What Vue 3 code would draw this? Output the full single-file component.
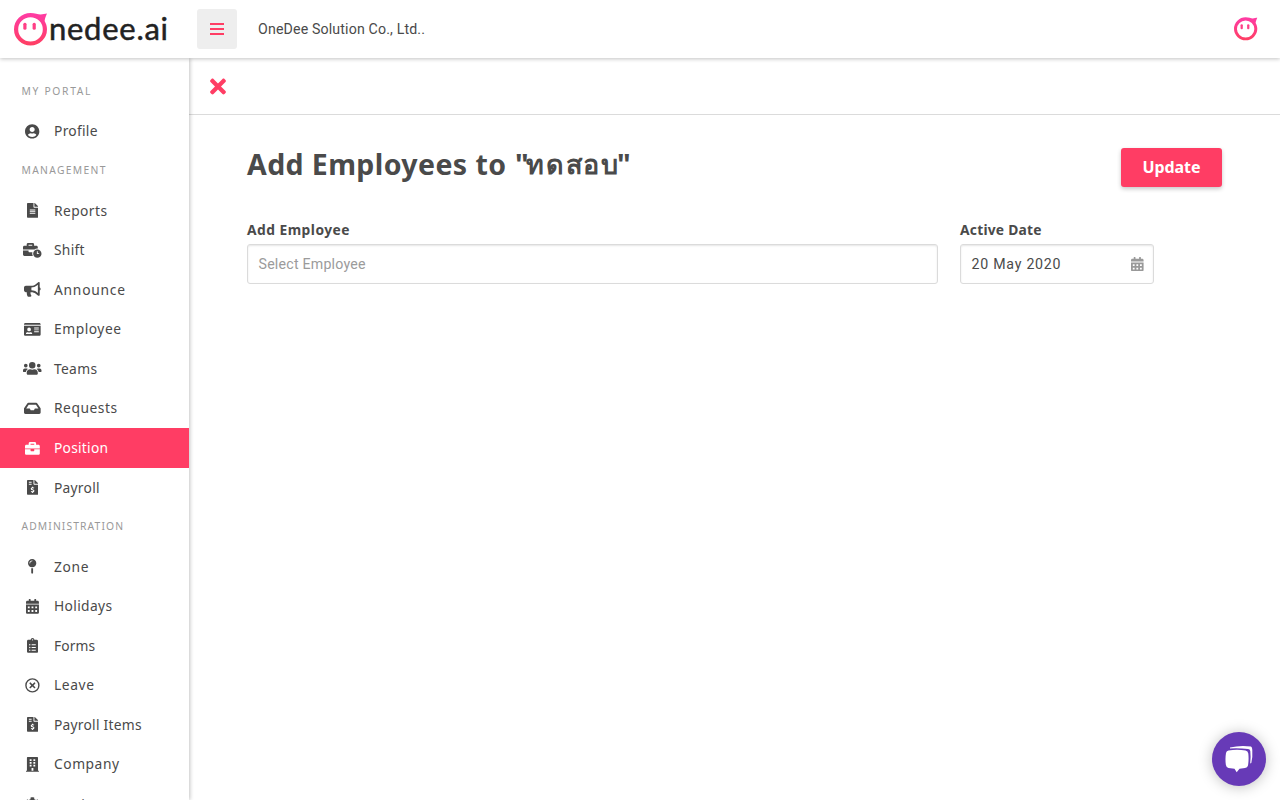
<script setup>
const circle = (x, y, r) => `M${x - r} ${y}a${r} ${r} 0 1 0 ${2 * r} 0a${r} ${r} 0 1 0 ${-2 * r} 0z`
const rect = (x, y, w, h) => `M${x} ${y}h${w}v${h}h${-w}z`

const dollarFile = {
  w: 384,
  d: 'M224 136V0H24C10.700 0 0 10.700 0 24v464c0 13.300 10.700 24 24 24h336c13.300 0 24-10.700 24-24V160H248c-13.200 0-24-10.800-24-24zM384 121.900v6.100H256V0h6.100c6.400 0 12.500 2.500 17 7l97.900 98c4.500 4.500 7 10.600 7 16.900z' + rect(64, 64, 96, 32) + rect(64, 128, 96, 32),
  cut: 'M240 284c-14-16-32-18-48-18-28 0-45 14-45 34 0 46 92 28 92 76 0 22-20 36-47 36-18 0-36-5-50-19M192 232v34M192 412v34'
}
const calendar = {
  w: 448,
  d: 'M0 464c0 26.500 21.500 48 48 48h352c26.500 0 48-21.500 48-48V192H0zM400 64h-48V16c0-8.800-7.200-16-16-16h-32c-8.800 0-16 7.200-16 16v48H160V16c0-8.800-7.200-16-16-16h-32c-8.800 0-16 7.200-16 16v48H48C21.500 64 0 85.500 0 112v48h448v-48c0-26.500-21.500-48-48-48z' +
    [64, 192, 320].map(x => rect(x, 256, 64, 64) + rect(x, 384, 64, 64)).join('')
}
const icons = {
  user: { w: 496, d: 'M248 8C111 8 0 119 0 256s111 248 248 248 248-111 248-248S385 8 248 8zm0 96c48.600 0 88 39.400 88 88s-39.400 88-88 88-88-39.400-88-88 39.400-88 88-88zm0 344c-58.700 0-111.300-26.600-146.500-68.200 18.800-35.400 55.600-59.800 98.500-59.800 2.400 0 4.800.4 7.100 1.100 13 4.200 26.600 6.900 40.900 6.900s28-2.700 40.900-6.900c2.300-.7 4.700-1.100 7.100-1.100 42.900 0 79.700 24.400 98.500 59.800C359.300 421.400 306.700 448 248 448z' },
  file: { w: 384, d: 'M224 136V0H24C10.700 0 0 10.700 0 24v464c0 13.300 10.700 24 24 24h336c13.300 0 24-10.700 24-24V160H248c-13.200 0-24-10.800-24-24zM384 121.900v6.100H256V0h6.100c6.400 0 12.500 2.500 17 7l97.900 98c4.500 4.500 7 10.600 7 16.900z' + rect(96, 224, 192, 32) + rect(96, 288, 192, 32) + rect(96, 352, 192, 32) },
  shift: { w: 640, d: 'M496 224c-79.590 0-144 64.410-144 144s64.410 144 144 144 144-64.410 144-144-64.410-144-144-144zm64 150.290c0 5.340-4.370 9.710-9.710 9.710h-60.570c-5.340 0-9.710-4.370-9.710-9.710v-76.570c0-5.340 4.370-9.710 9.710-9.710h12.570c5.340 0 9.710 4.370 9.710 9.710V352h38.290c5.340 0 9.710 4.370 9.710 9.710zM496 192c5.400 0 10.720.33 16 .81V144c0-25.600-22.400-48-48-48h-80V48c0-25.600-22.400-48-48-48H176c-25.600 0-48 22.400-48 48v48H48c-25.600 0-48 22.400-48 48v80h395.120c28.600-20.090 63.350-32 100.880-32zM320 96H192V64h128zm6.820 224H208c-8.840 0-16-7.160-16-16v-48H0v144c0 25.600 22.400 48 48 48h291.430C327.100 423.960 320 396.820 320 368c0-16.660 2.480-32.720 6.820-48z' },
  horn: { w: 576, d: 'M576 240c0-23.630-12.950-44.040-32-55.120V32.010C544 23.260 537.020 0 512 0c-7.120 0-14.190 2.380-19.980 7.020l-85.030 68.030C364.280 109.190 310.660 128 256 128H64c-35.350 0-64 28.650-64 64v96c0 35.350 28.650 64 64 64h33.700c-1.390 10.480-2.180 21.140-2.180 32 0 39.770 9.260 77.350 25.560 110.940 5.190 10.690 16.520 17.060 28.400 17.060h74.280c26.050 0 41.690-29.840 25.900-50.560-16.400-21.520-26.150-48.360-26.150-77.440 0-11.110 1.620-21.790 4.410-32H256c54.660 0 108.280 18.810 150.980 52.950l85.030 68.030a32 32 0 0 0 19.980 7.020c24.920 0 32-22.780 32-32V295.130C563.050 284.040 576 263.630 576 240zm-96 141.420l-33.050-26.440C392.950 311.780 325.120 288 256 288v-96c69.120 0 136.950-23.780 190.950-66.980L480 98.580z' },
  card: { w: 576, d: 'M528 32H48C21.500 32 0 53.500 0 80v16h576V80c0-26.500-21.500-48-48-48zM0 432c0 26.500 21.500 48 48 48h480c26.500 0 48-21.500 48-48V128H0zM67.100 396.200C75.500 370.500 99.600 352 128 352h8.200c12.300 5.100 25.700 8 39.800 8s27.600-2.900 39.800-8h8.200c28.400 0 52.500 18.500 60.900 44.200 3.200 9.900-5.200 19.800-15.600 19.800H82.700c-10.400 0-18.800-10-15.600-19.800z' + circle(176, 256, 64) + rect(352, 192, 160, 32) + rect(352, 256, 160, 32) + rect(352, 320, 160, 32) },
  users: { w: 640, d: circle(96, 160, 64) + circle(544, 160, 64) + circle(320, 144, 112) + 'M576 256h-64c-17.600 0-33.500 7.100-45.100 18.600 40.300 22.100 68.900 62 75.100 109.400h66c17.700 0 32-14.300 32-32v-32c0-35.300-28.700-64-64-64zM396.800 288h-8.300c-20.800 10-43.900 16-68.500 16s-47.600-6-68.500-16h-8.300C179.600 288 128 339.600 128 403.200V432c0 26.500 21.500 48 48 48h288c26.500 0 48-21.500 48-48v-28.800c0-63.600-51.600-115.200-115.200-115.200zm-223.700-13.400C161.500 263.100 145.600 256 128 256H64c-35.300 0-64 28.700-64 64v32c0 17.700 14.300 32 32 32h65.900c6.300-47.400 34.900-87.300 75.200-109.400z' },
  inbox: { w: 576, d: 'M567.938 243.908L462.250 85.374A48 48 0 0 0 422.311 64H153.689a48 48 0 0 0-39.938 21.374L8.062 243.908A48 48 0 0 0 0 270.533V400c0 26.510 21.490 48 48 48h480c26.510 0 48-21.490 48-48V270.533a48 48 0 0 0-8.062-26.625zM162.252 128h251.497l85.333 128H376l-32 64H232l-32-64H76.918z' },
  briefcase: { w: 512, d: 'M320 336c0 8.840-7.160 16-16 16h-96c-8.840 0-16-7.160-16-16v-48H0v144c0 25.600 22.400 48 48 48h416c25.600 0 48-22.400 48-48V288H320zm144-208h-80V80c0-25.600-22.400-48-48-48H176c-25.600 0-48 22.400-48 48v48H48c-25.600 0-48 22.400-48 48v80h512v-80c0-25.600-22.400-48-48-48zm-144 0H192V96h128z' },
  dollarFile,
  pin: { w: 288, d: 'M112 316.940v156.690l22.020 33.020c4.750 7.120 15.220 7.120 19.970 0L176 473.630V316.940c-10.390 1.920-21.060 3.060-32 3.060s-21.610-1.140-32-3.060zM144 0C64.470 0 0 64.470 0 144s64.470 144 144 144 144-64.470 144-144S223.530 0 144 0zm0 76c-37.500 0-68 30.500-68 68 0 6.620-5.380 12-12 12s-12-5.380-12-12c0-50.730 41.280-92 92-92 6.620 0 12 5.380 12 12s-5.380 12-12 12z' },
  calendar,
  clipboard: { w: 384, d: 'M336 64h-80c0-35.300-28.700-64-64-64s-64 28.700-64 64H48C21.500 64 0 85.500 0 112v352c0 26.500 21.500 48 48 48h288c26.500 0 48-21.500 48-48V112c0-26.500-21.500-48-48-48z' + circle(192, 64, 24) + circle(96, 232, 24) + circle(96, 328, 24) + circle(96, 424, 24) + rect(160, 216, 144, 32) + rect(160, 312, 144, 32) + rect(160, 408, 144, 32) },
  leave: { w: 512, d: circle(256, 256, 248) + circle(256, 256, 200) + 'M357.800 193.800L295.600 256l62.200 62.200c4.700 4.700 4.700 12.300 0 17l-22.600 22.600c-4.700 4.700-12.300 4.700-17 0L256 295.600l-62.200 62.200c-4.700 4.700-12.300 4.700-17 0l-22.600-22.600c-4.700-4.700-4.700-12.300 0-17l62.200-62.200-62.200-62.200c-4.700-4.700-4.700-12.300 0-17l22.600-22.600c4.700-4.700 12.300-4.700 17 0l62.200 62.200 62.200-62.200c4.700-4.700 12.300-4.700 17 0l22.600 22.600c4.700 4.700 4.700 12.300 0 17z' },
  building: { w: 448, d: 'M436 480h-20V24c0-13.255-10.745-24-24-24H56C42.745 0 32 10.745 32 24v456H12c-6.627 0-12 5.373-12 12v20h448v-20c0-6.627-5.373-12-12-12z' + [76, 172, 268].map(y => rect(128, y, 64, 64) + rect(256, y, 64, 64)).join('') + rect(192, 384, 64, 96) },
  settings: { w: 512, d: 'M487 315l-42-24c4-23 4-47 0-70l42-24c5-3 8-9 6-14-11-36-30-68-55-95-4-4-10-5-15-2l-42 24c-18-15-39-27-61-35V26c0-6-4-11-10-12-37-8-74-8-109 0-6 1-10 6-10 12v49c-22 8-43 20-61 35L88 86c-5-3-11-2-15 2-25 27-44 59-55 95-2 5 0 11 6 14l42 24c-4 23-4 47 0 70l-42 24c-6 3-8 9-6 14 11 36 30 68 55 95 4 4 10 5 15 2l42-24c18 15 39 27 61 35v49c0 6 4 11 10 12 37 8 74 8 109 0 6-1 10-6 10-12v-49c22-8 43-20 61-35l42 24c5 3 11 2 15-2 25-27 44-59 55-95 2-5-1-11-6-14z' + circle(256, 256, 80) }
}

const rows = [
  { heading: 'MY PORTAL', w: 69 },
  { label: 'Profile', icon: 'user', w: 43.5 },
  { heading: 'MANAGEMENT', w: 84 },
  { label: 'Reports', icon: 'file', w: 53 },
  { label: 'Shift', icon: 'shift', w: 30.5 },
  { label: 'Announce', icon: 'horn', w: 71 },
  { label: 'Employee', icon: 'card', w: 67 },
  { label: 'Teams', icon: 'users', w: 43 },
  { label: 'Requests', icon: 'inbox', w: 63 },
  { label: 'Position', icon: 'briefcase', w: 54, active: true },
  { label: 'Payroll', icon: 'dollarFile', w: 45.5 },
  { heading: 'ADMINISTRATION', w: 101.5 },
  { label: 'Zone', icon: 'pin', w: 34.5 },
  { label: 'Holidays', icon: 'calendar', w: 58 },
  { label: 'Forms', icon: 'clipboard', w: 41 },
  { label: 'Leave', icon: 'leave', w: 40 },
  { label: 'Payroll Items', icon: 'dollarFile', w: 87.5 },
  { label: 'Company', icon: 'building', w: 65 },
  { label: 'Settings', icon: 'settings', w: 56 }
]

// Spreads the letters of a text so that it fills the given width.
const vFit = {
  mounted(el, { value }) {
    const width = el.getBoundingClientRect().width
    const extra = (value - width) / (el.textContent.length - 1)
    el.style.letterSpacing = `${extra}px`
    el.style.marginRight = `${-extra}px`
  }
}
</script>

<template>
  <div class="page">
    <svg class="defs" width="0" height="0" aria-hidden="true">
      <defs>
        <linearGradient id="brand" x1="0" y1="0" x2="0" y2="1">
          <stop offset="0" stop-color="#ff3ba5" />
          <stop offset="1" stop-color="#ff3f62" />
        </linearGradient>
        <symbol id="face" viewBox="0 0 34 33">
          <path fill="url(#brand)" fill-rule="evenodd" d="M16.500 0C21 0 24 1.500 26.500 1.500C29 1.500 31 .6 33 .6C32 3 31 5 30.600 8C32 10.500 33 13 33 16.300A16.500 16.300 0 1 1 16.500 0zM16.500 4.300a12.300 12.100 0 1 0 0 24.200a12.300 12.100 0 1 0 0-24.200z" />
          <rect x="9.300" y="9.800" width="3.200" height="7" rx="1.500" fill="#ff3f86" />
          <rect x="18.600" y="9.800" width="3.200" height="7" rx="1.500" fill="#ff3f86" />
        </symbol>
      </defs>
    </svg>

    <header class="topbar">
      <div class="logo">
        <svg class="logo-face"><use href="#face" /></svg>
        <span class="logo-text"><span v-fit="119">nedee.ai</span></span>
      </div>
      <button class="burger" aria-label="Menu"><i></i><i></i><i></i></button>
      <span class="company"><span v-fit="167">OneDee Solution Co., Ltd..</span></span>
      <svg class="avatar"><use href="#face" /></svg>
    </header>

    <div class="body">
      <nav class="sidebar">
        <template v-for="row in rows" :key="row.heading || row.label">
          <div v-if="row.heading" class="row heading"><span v-fit="row.w">{{ row.heading }}</span></div>
          <a v-else class="row item" :class="{ active: row.active }">
            <span class="icon">
              <svg :viewBox="`0 0 ${icons[row.icon].w} 512`" :style="{ width: `${icons[row.icon].w / 512 * 14.8}px` }">
                <path fill="currentColor" fill-rule="evenodd" :d="icons[row.icon].d" />
                <path v-if="icons[row.icon].cut" :d="icons[row.icon].cut" fill="none" stroke="#fff" stroke-width="38" />
              </svg>
            </span>
            <span class="label"><span v-fit="row.w">{{ row.label }}</span></span>
          </a>
        </template>
      </nav>

      <main class="main">
        <div class="closebar">
          <svg viewBox="0 0 352 512"><path fill="#ff3d64" d="M242.720 256l100.070-100.070c12.280-12.280 12.280-32.190 0-44.480l-22.240-22.240c-12.280-12.280-32.190-12.280-44.480 0L176 189.280 75.930 89.210c-12.280-12.280-32.190-12.280-44.480 0L9.210 111.450c-12.280 12.280-12.280 32.190 0 44.480L109.280 256 9.210 356.070c-12.280 12.280-12.280 32.190 0 44.480l22.240 22.240c12.280 12.280 32.200 12.280 44.480 0L176 322.720l100.070 100.070c12.280 12.280 32.200 12.280 44.480 0l22.240-22.240c12.280-12.280 12.280-32.190 0-44.480z" /></svg>
        </div>
        <div class="content">
          <div class="title-row">
            <h1><span v-fit="259">Add Employees to</span><span class="quote">"</span><span v-fit="92" class="thai">ทดสอบ</span><span class="quote-end">"</span></h1>
            <button class="update"><span v-fit="58">Update</span></button>
          </div>
          <div class="fields">
            <div class="field wide">
              <label><span v-fit="102.5">Add Employee</span></label>
              <div class="input placeholder"><span v-fit="107">Select Employee</span></div>
            </div>
            <div class="field date">
              <label><span v-fit="81.5">Active Date</span></label>
              <div class="input">
                <span v-fit="89">20 May 2020</span>
                <svg class="cal" viewBox="0 0 448 512"><path fill="currentColor" fill-rule="evenodd" :d="calendar.d" /></svg>
              </div>
            </div>
          </div>
        </div>
      </main>
    </div>

    <button class="chat" aria-label="Chat">
      <svg viewBox="0 0 54 54">
        <path fill="#fff" d="M18 15.500Q28 13 39 14.500Q40.300 15 40.300 18Q40.800 25 39.300 31L38.200 31.500Q39 25 38.300 19Q38 17.200 36 17Q27 16 18 16.500z" />
        <path fill="#fff" d="M16.500 18.400Q25 17 33.500 18.400Q36 19 36.300 21.500Q37 27.500 36 33.500Q35.500 35.700 33 36.100L27.500 36.700L24.700 40.300L22.500 36.700L16.500 36Q14.300 35.500 13.900 33Q13 27 14 21Q14.500 18.800 16.500 18.400z" />
      </svg>
    </button>
  </div>
</template>

<style>
body { margin: 0; overflow: hidden; }
</style>

<style scoped>
* { box-sizing: border-box; }
.page {
  position: relative;
  height: 800px;
  overflow: hidden;
  display: flex;
  flex-direction: column;
  background: #fff;
  color: #4a4a4a;
  font-family: "Noto Sans", sans-serif;
  font-size: 13.8px;
  white-space: nowrap;
}
.defs { position: absolute; }
button { border: 0; padding: 0; font-family: inherit; }
.topbar {
  position: relative;
  z-index: 2;
  flex: none;
  display: flex;
  align-items: center;
  height: 58px;
  background: #fff;
  box-shadow: 0 1px 4px rgba(0, 0, 0, .24);
}
.logo { display: flex; width: 183px; margin-left: 14px; height: 58px; align-items: center; flex: none; }
.logo-face { width: 34px; height: 33px; }
.logo-text {
  margin-left: 1px;
  padding-bottom: 3px;
  font-family: Lato, sans-serif;
  font-size: 31px;
  line-height: 40px;
  color: #222;
  -webkit-text-stroke: .5px #222;
}
.burger {
  flex: none;
  display: flex;
  flex-direction: column;
  align-items: center;
  justify-content: center;
  gap: 3px;
  width: 40px;
  height: 40px;
  border-radius: 3px;
  background: #eee;
}
.burger i { width: 14px; height: 2.300px; background: #ff3d64; }
.company { margin-left: 21px; font-family: Roboto, sans-serif; font-size: 14.2px; }
.avatar { width: 24px; height: 24px; margin: 0 22px 1px auto; }
.body { flex: 1; display: flex; min-height: 0; }
.sidebar {
  position: relative;
  z-index: 1;
  flex: none;
  width: 189px;
  padding-top: 14.1px;
  background: #fff;
  box-shadow: 1px 0 4px rgba(0, 0, 0, .24);
  overflow: hidden;
}
.row { display: flex; align-items: center; height: 39.57px; }
.heading { padding: 0 0 2px 21.5px; font-size: 10.3px; color: #999; }
.item { padding-left: 22px; }
.item.active { background: #ff3d64; color: #fff; }
.icon { display: flex; justify-content: center; width: 21px; margin-right: 11px; }
.icon svg { flex: none; height: 14.8px; }
.label { padding-bottom: 1px; }
.item:last-child .label { padding: 1px 0 0; }
.main { flex: 1; min-width: 0; }
.closebar { height: 57px; border-bottom: 1px solid #dbdbdb; padding: 17px 0 0 21px; }
.closebar svg { display: block; width: 16px; height: 23px; }
.content { padding: 33px 58px 0; }
.title-row { display: flex; justify-content: space-between; height: 73px; }
h1 { margin: 0; font-size: 28.500px; line-height: 32px; font-weight: 700; display: flex; }
.quote { width: 11px; margin-left: 9px; }
.quote-end { margin-left: -1px; }
.thai { font-size: 27px; }
.update {
  width: 101px;
  height: 39px;
  padding-bottom: 2px;
  border-radius: 3px;
  background: #ff3d64;
  color: #fff;
  font-size: 16px;
  font-weight: 700;
  box-shadow: 0 2px 4px rgba(0, 0, 0, .22);
}
.fields { display: flex; gap: 22px; }
.wide { width: 691px; }
.date { width: 194px; }
label { display: block; height: 23px; line-height: 18px; font-size: 13.8px; font-weight: 700; }
.input {
  display: flex;
  align-items: center;
  justify-content: space-between;
  height: 40px;
  padding: 0 9.500px 0 10.500px;
  border: 1px solid #dbdbdb;
  border-radius: 3px;
  box-shadow: inset 0 1px 2px rgba(10, 10, 10, .1);
  font-family: Roboto, sans-serif;
  font-size: 14.2px;
}
.placeholder { color: #9b9b9b; }
.cal { width: 12.6px; height: 14.4px; color: #999; }
.chat {
  position: absolute;
  right: 14px;
  bottom: 14px;
  width: 54px;
  height: 54px;
  border-radius: 50%;
  background: #673ab7;
  box-shadow: 0 1px 14px rgba(0, 0, 0, .25);
}
.chat svg { display: block; width: 54px; height: 54px; }
</style>
